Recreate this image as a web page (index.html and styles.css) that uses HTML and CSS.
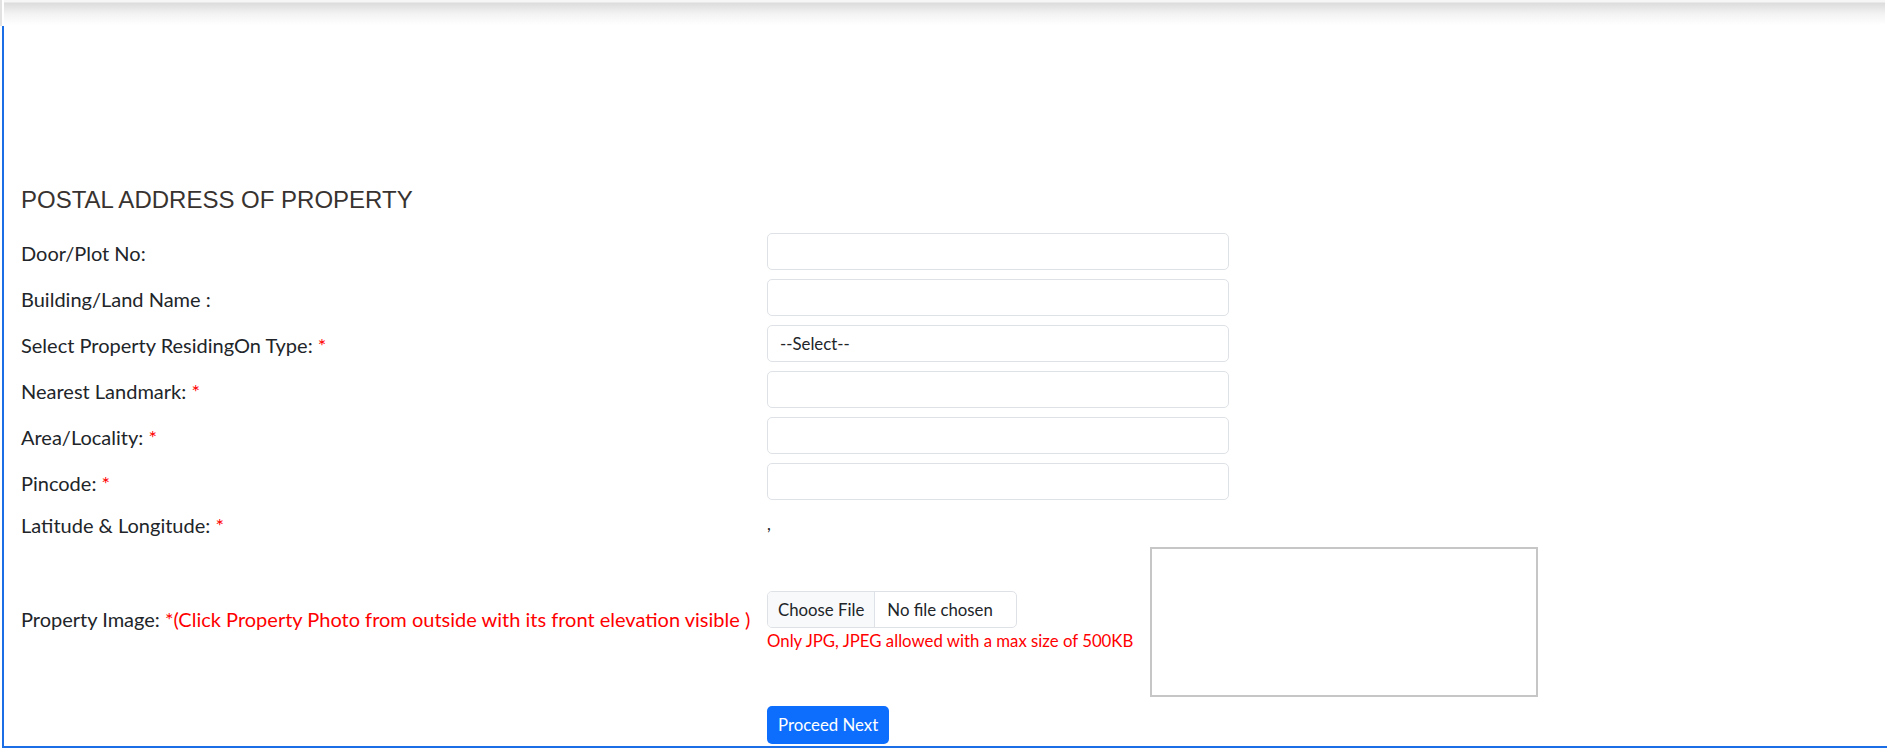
FILE: index.html
```html
<!DOCTYPE html>
<html>
<head>
  <meta charset="UTF-8">
  <meta name="viewport" content="width=device-width, initial-scale=1.0">
  <title>Postal Address of Property</title>
  <link rel="stylesheet" href="styles.css">
</head>
<body>
  <div class="topbar">
    <div class="corner"></div>
    <div class="shade"></div>
  </div>

  <div class="frame">
    <h3 class="title">POSTAL ADDRESS OF PROPERTY</h3>

    <form class="fields">
      <div class="field">
        <label>Door/Plot No:</label>
        <input class="control" type="text">
      </div>
      <div class="field">
        <label>Building/Land Name :</label>
        <input class="control" type="text">
      </div>
      <div class="field">
        <label>Select Property ResidingOn Type: <span class="req">*</span></label>
        <select class="control">
          <option>--Select--</option>
        </select>
      </div>
      <div class="field">
        <label>Nearest Landmark: <span class="req">*</span></label>
        <input class="control" type="text">
      </div>
      <div class="field">
        <label>Area/Locality: <span class="req">*</span></label>
        <input class="control" type="text">
      </div>
      <div class="field">
        <label>Pincode: <span class="req">*</span></label>
        <input class="control" type="text">
      </div>
      <div class="field">
        <label>Latitude &amp; Longitude: <span class="req">*</span></label>
        <div class="coords"><span id="lat"></span>,<span id="lng"></span></div>
      </div>
      <div class="field photo">
        <label>Property Image: <span class="req">*(Click Property Photo from outside with its front elevation visible )</span></label>
        <div class="upload">
          <input class="file" type="file" accept=".jpg,.jpeg">
          <div class="hint">Only JPG, JPEG allowed with a max size of 500KB</div>
        </div>
        <div class="preview"></div>
      </div>
      <div class="field">
        <span></span>
        <div><button class="btn" type="button">Proceed Next</button></div>
      </div>
    </form>
  </div>
</body>
</html>
```

FILE: styles.css
```css
body {
  margin: 0;
  background: #fff;
  font-family: Lato, 'Noto Sans', sans-serif;
  color: #212529;
}
.topbar {
  display: flex;
  height: 26px;
}
.topbar .corner {
  width: 2px;
  background: #e2e2e2;
}
.topbar .shade {
  flex: 1;
  margin: 0 2px 0 2px;
  background: linear-gradient(#f6f6f6 0, #f6f6f6 2px, #dcdcdc 3px, #f3f3f3 14px, #fff 25px);
}
.frame {
  box-sizing: border-box;
  height: 722px;
  margin-left: 2px;
  padding: 160px 0 0 17px;
  border-left: 2px solid #1b6ee6;
  border-bottom: 2px solid #1b6ee6;
  overflow: hidden;
}
.title {
  margin: 0 0 18px;
  font-family: 'Liberation Sans', Arial, sans-serif;
  font-size: 24px;
  font-weight: normal;
  line-height: 1.2;
  color: #383330;
}
.fields {
  display: flex;
  flex-direction: column;
  gap: 9px;
  margin: 0;
}
.field {
  display: grid;
  grid-template-columns: 746px 462px;
  align-items: center;
}
.field label {
  padding-top: 4px;
  font-size: 20px;
  line-height: 25px;
}
.req {
  color: #ff0000;
}
.control {
  box-sizing: border-box;
  width: 462px;
  height: 37px;
  padding: 0 12px;
  border: 1px solid #dee2e6;
  border-radius: 5px;
  background: #fff;
  font-family: Lato, 'Noto Sans', sans-serif;
  font-size: 16.8px;
  color: #212529;
  appearance: none;
  outline: none;
}
.coords {
  font-size: 16.8px;
  line-height: 1.5;
  color: #212529;
}
.photo {
  grid-template-columns: 746px 383px 388px;
}
.photo label {
  padding: 0 0 4px;
}
.upload {
  display: flex;
  flex-direction: column;
}
.file {
  box-sizing: border-box;
  width: 250px;
  height: 37px;
  padding: 0;
  border: 1px solid #dee2e6;
  border-radius: 5px;
  font-family: Lato, 'Noto Sans', sans-serif;
  font-size: 16.8px;
  color: #212529;
  overflow: hidden;
}
.file::file-selector-button {
  height: 100%;
  margin: 0 12px 0 0;
  padding: 0 10px;
  border: 0;
  border-right: 1px solid #dee2e6;
  background: #f8f9fa;
  font: inherit;
  color: #212529;
}
.hint {
  font-size: 16.8px;
  line-height: 1.5;
  color: #ff0000;
}
.preview {
  box-sizing: border-box;
  width: 388px;
  height: 150px;
  border: 2px solid #c6c6c6;
}
.btn {
  height: 38px;
  padding: 0 11px;
  border: 0;
  border-radius: 5px;
  background: #0d6efd;
  color: #fff;
  font-family: Lato, 'Noto Sans', sans-serif;
  font-size: 16.8px;
}
```
